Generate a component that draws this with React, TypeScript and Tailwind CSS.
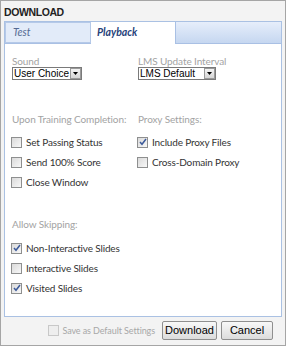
import React from 'react';

const ui = { fontFamily: 'Lato, "Noto Sans", sans-serif' };
const sys = { fontFamily: '"Liberation Sans", Arial, sans-serif' };

const Box: React.FC<{ checked?: boolean; disabled?: boolean }> = ({ checked, disabled }) => (
  <span
    className={`w-[11px] h-[11px] border flex items-center justify-center shrink-0 ${
      disabled ? 'border-[#c8c8c8] bg-[#eeeeee]' : 'border-[#8e8f8f] bg-gradient-to-br from-[#dadada] to-[#f8f8f8]'
    }`}
  >
    {checked && (
      <svg width="8" height="8" viewBox="0 0 8 8">
        <path d="M1 4 L3 6.3 L7 1" fill="none" stroke="#3c5a9a" strokeWidth="1.5" />
      </svg>
    )}
  </span>
);

const Check: React.FC<{ label: string; checked?: boolean }> = ({ label, checked }) => (
  <label className="flex items-center gap-[4px] -ml-[1px] h-[20px] text-[10px] tracking-[-0.15px] text-[#333] whitespace-nowrap" style={ui}>
    <Box checked={checked} />
    {label}
  </label>
);

const Select: React.FC<{ value: string; w: string }> = ({ value, w }) => (
  <div className={`flex items-center h-[13px] border border-[#7a7a7a] bg-white ${w}`} style={sys}>
    <span className="flex-1 text-[10px] leading-[11px] pl-[1px] text-black whitespace-nowrap overflow-hidden">{value}</span>
    <span className="w-[11px] h-[11px] border border-[#9a9a9a] bg-gradient-to-b from-[#f4f4f4] to-[#d6d6d6] flex items-center justify-center shrink-0">
      <svg width="5" height="3" viewBox="0 0 5 3">
        <path d="M0 0 H5 L2.5 3 Z" fill="#000" />
      </svg>
    </span>
  </div>
);

const Heading: React.FC<{ children: React.ReactNode }> = ({ children }) => (
  <div className="text-[10px] text-[#a3a3a3] leading-[12px] tracking-[-0.1px] whitespace-nowrap" style={ui}>{children}</div>
);

export default function App() {
  return (
    <div className="w-[286px] h-[346px] bg-[#f3f3f3] border border-[#a5a5a5] flex flex-col">
      <div className="text-[10.5px] leading-[12px] font-bold tracking-[-0.4px] text-[#222] px-[3px] pt-[5px] h-[20px]" style={sys}>
        DOWNLOAD
      </div>
      <div className="mx-[3px] h-[296px] border border-[#aac1e3] bg-white flex flex-col">
        <div className="flex h-[22px] border-b border-[#a9c0e4] bg-gradient-to-b from-[#e6eefb] to-[#c6d7f0]">
          <div className="w-[86px] border border-[#b5c9e8] bg-[#e2ebf9] flex items-center pl-[7px] text-[10.5px] italic text-[#546a93]" style={ui}>
            Test
          </div>
          <div className="w-[85px] bg-white border-r border-[#a9c0e4] -mb-px flex items-center pl-[6px] text-[10.5px] italic font-bold text-[#27427a]" style={ui}>
            Playback
          </div>
          <div className="flex-1" />
        </div>
        <div className="flex-1 pl-[7px] pr-[6px] pt-[11px]">
          <div className="flex">
            <div className="w-[126px]">
              <Heading>Sound</Heading>
              <Select value="User Choice" w="w-[70px]" />
            </div>
            <div>
              <Heading>LMS Update Interval</Heading>
              <Select value="LMS Default" w="w-[78px]" />
            </div>
          </div>
          <div className="flex mt-[33px]">
            <div className="w-[126px]">
              <Heading>Upon Training Completion:</Heading>
              <div className="mt-[7px]">
                <Check label="Set Passing Status" />
                <Check label="Send 100% Score" />
                <Check label="Close Window" />
              </div>
            </div>
            <div>
              <Heading>Proxy Settings:</Heading>
              <div className="mt-[7px]">
                <Check label="Include Proxy Files" checked />
                <Check label="Cross-Domain Proxy" />
              </div>
            </div>
          </div>
          <div className="mt-[26px]">
            <Heading>Allow Skipping:</Heading>
            <div className="mt-[8px]">
              <Check label="Non-Interactive Slides" checked />
              <Check label="Interactive Slides" />
              <Check label="Visited Slides" checked />
            </div>
          </div>
        </div>
      </div>
      <div className="flex items-center justify-end gap-[4px] pr-[12px] pt-[4px]">
        <label className="flex items-center gap-[3px] text-[9px] tracking-[-0.1px] text-[#a8a8a8] mr-[3px] whitespace-nowrap" style={ui}>
          <Box disabled />
          Save as Default Settings
        </label>
        <button className="h-[19px] w-[55px] border border-[#8f8f8f] rounded-[2px] bg-gradient-to-b from-[#f8f8f8] to-[#dcdcdc] text-[11px] text-black" style={sys}>
          Download
        </button>
        <button className="h-[19px] w-[52px] border border-[#8f8f8f] rounded-[2px] bg-gradient-to-b from-[#f8f8f8] to-[#dcdcdc] text-[11px] text-black" style={sys}>
          Cancel
        </button>
      </div>
    </div>
  );
}
